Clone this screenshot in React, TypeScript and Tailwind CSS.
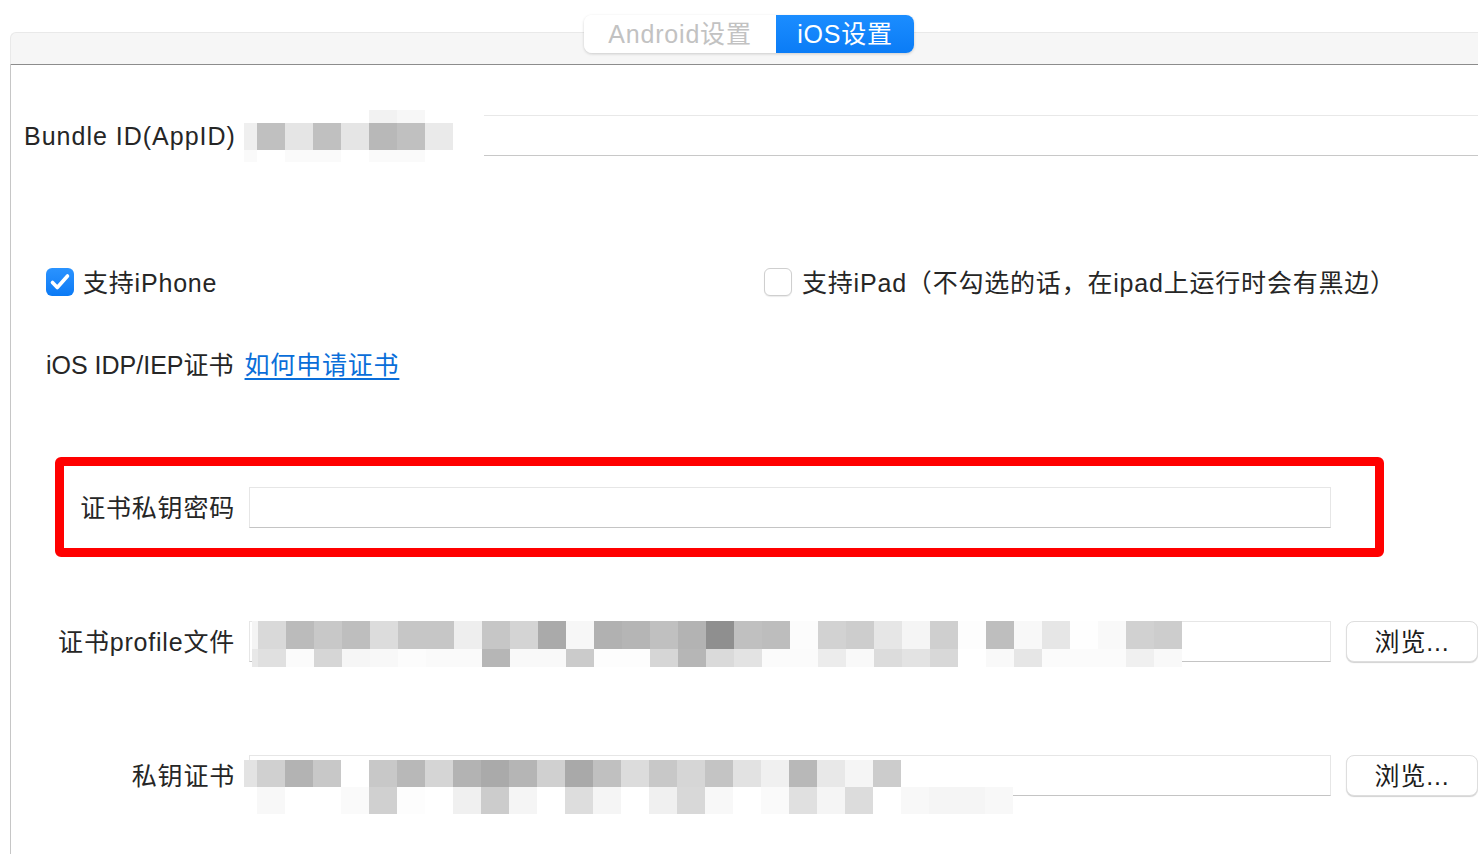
import React from "react";

type MosaicRow = { h: number; lead?: string; leadW?: number; cells: string[] };

const font = { fontFamily: '"Liberation Sans", "Noto Sans CJK SC", sans-serif' };

function Mosaic({ rows }: { rows: MosaicRow[] }) {
  return (
    <div className="flex flex-col">
      {rows.map((r, i) => (
        <div key={i} className="flex" style={{ height: r.h }}>
          {r.leadW ? <div style={{ width: r.leadW, background: r.lead }} /> : null}
          {r.cells.map((c, j) => (
            <div key={j} className="w-[28px] shrink-0" style={{ background: "#" + c + c + c }} />
          ))}
        </div>
      ))}
    </div>
  );
}

function Field({ children }: { children?: React.ReactNode }) {
  return (
    <div className="relative h-[41px] w-[1082px] shrink-0 border border-[#e6e6e6] border-b-[#c4c4c4] bg-white">
      {children}
    </div>
  );
}

function Browse() {
  return (
    <button className="ml-[15px] flex h-[41px] w-[132px] shrink-0 items-center justify-center rounded-[8px] border border-[#dedede] bg-white pt-[2px] text-[25px] text-[#1c1c1c] shadow-[0_1px_1px_rgba(0,0,0,0.18)]">
      浏览...
    </button>
  );
}

export default function App() {
  return (
    <div className="flex h-[854px] w-[1478px] flex-col overflow-hidden bg-white text-[25px] tracking-[0.8px] text-[#262626]" style={font}>
      {/* tab header */}
      <div className="relative h-[65px] shrink-0 pl-[10px] pt-[32px]">
        <div className="h-[33px] rounded-tl-[6px] border-b border-l border-t border-[#e9e9e9] border-b-[#8c8c8c] bg-[#f6f6f6]" />
        <div className="absolute left-[584px] top-[15px] flex h-[38px] rounded-[8px] shadow-[0_1px_3px_rgba(0,0,0,0.18)]">
          <div className="flex w-[192px] items-center justify-center rounded-l-[8px] bg-white pt-[1px] text-[25px] text-[#c2c2c2]">
            Android设置
          </div>
          <div className="flex w-[138px] items-center justify-center rounded-r-[8px] bg-gradient-to-b from-[#1b8dff] to-[#0a7cf6] pt-[1px] text-[25px] text-white">
            iOS设置
          </div>
        </div>
      </div>

      {/* panel */}
      <div className="ml-[10px] flex flex-1 flex-col border-l border-[#c6c6c6]">
        {/* bundle id */}
        <div className="relative mt-[50px] flex h-[41px] items-center">
          <div className="w-[473px] shrink-0 pl-[13px] pt-[3px] tracking-[1px]">Bundle ID(AppID)</div>
          <div className="h-[41px] flex-1 border-b border-t border-[#e8e8e8] border-b-[#c8c8c8]" />
          <div className="absolute left-[233px] top-[-5px]">
            <Mosaic
              rows={[
                { h: 13, leadW: 125, lead: "#ffffff", cells: ["f2", "f7"] },
                { h: 27, leadW: 13, lead: "#efefef", cells: ["c0", "e5", "c0", "e5", "b8", "c0", "ea"] },
                { h: 12, leadW: 13, lead: "#fafafa", cells: ["ff", "fa", "fa", "ff", "fa", "fa", "ff"] },
              ]}
            />
          </div>
        </div>

        {/* device checkboxes */}
        <div className="mt-[112px] flex h-[28px] items-center pl-[35px]">
          <div className="flex w-[718px] items-center">
            <div className="flex h-[28px] w-[28px] items-center justify-center rounded-[6px] bg-gradient-to-b from-[#2a93ff] to-[#0a7af5]">
              <svg width="24" height="24" viewBox="0 0 24 24">
                <path d="M4.5 12.5l4.8 5L19.5 6" fill="none" stroke="white" strokeWidth="3.6" strokeLinecap="round" strokeLinejoin="round" />
              </svg>
            </div>
            <span className="ml-[9px] pt-[3px]">支持iPhone</span>
          </div>
          <div className="flex items-center">
            <div className="h-[28px] w-[28px] rounded-[6px] border border-[#cfcfcf] bg-white shadow-[0_1px_1px_rgba(0,0,0,0.08)]" />
            <span className="ml-[10px] pt-[3px]">支持iPad（不勾选的话，在ipad上运行时会有黑边）</span>
          </div>
        </div>

        {/* certificate heading */}
        <div className="mt-[53px] flex h-[30px] items-center pl-[35px] pt-[3px]">
          <span className="tracking-normal">iOS IDP/IEP证书</span>
          <a className="ml-[11px] text-[#0a6ed9] underline decoration-[1.5px] underline-offset-[4px]">如何申请证书</a>
        </div>

        {/* password, highlighted */}
        <div className="ml-[44px] mt-[78px] flex h-[100px] w-[1329px] items-center rounded-[6px] border-[9px] border-[#ff0000]">
          <div className="w-[171px] shrink-0 pt-[3px] text-right">证书私钥密码</div>
          <div className="ml-[14px]">
            <Field />
          </div>
        </div>

        {/* profile */}
        <div className="mt-[64px] flex h-[41px] items-center">
          <div className="w-[224px] shrink-0 pt-[3px] text-right">证书profile文件</div>
          <div className="ml-[14px]">
            <Field>
              <div className="absolute left-[2px] top-[-1px]">
                <Mosaic
                  rows={[
                    {
                      h: 28,
                      leadW: 6,
                      lead: "#f4f4f4",
                      cells: ["d9", "bb", "c8", "be", "dc", "c6", "c6", "ee", "c6", "d4", "aa", "f7", "b1", "b5", "c0", "b3", "8f", "c0", "bd", "fc", "d2", "cd", "e6", "f5", "cf", "fd", "be", "f8", "e6", "fe", "f9", "d1", "cd"],
                    },
                    {
                      h: 18,
                      leadW: 6,
                      lead: "#e8e8e8",
                      cells: ["e0", "fb", "d6", "f6", "f8", "fc", "fa", "fa", "b6", "f9", "f9", "cb", "fd", "fd", "d6", "b6", "da", "e3", "fb", "fb", "ec", "f9", "dc", "e3", "d8", "ff", "f9", "e6", "fb", "fb", "fb", "f0", "f9"],
                    },
                  ]}
                />
              </div>
            </Field>
          </div>
          <Browse />
        </div>

        {/* private key */}
        <div className="mt-[93px] flex h-[41px] items-center">
          <div className="w-[224px] shrink-0 pt-[3px] text-right">私钥证书</div>
          <div className="ml-[14px]">
            <Field>
              <div className="absolute left-[-6px] top-[4px]">
                <Mosaic
                  rows={[
                    {
                      h: 27,
                      leadW: 13,
                      lead: "#e3e3e3",
                      cells: ["d0", "b3", "c8", "ff", "c8", "b8", "d5", "b3", "aa", "b5", "d0", "a9", "c0", "dc", "c8", "d6", "c4", "e2", "f0", "b8", "e8", "f5", "cc"],
                    },
                    {
                      h: 27,
                      leadW: 13,
                      lead: "#ffffff",
                      cells: ["f8", "ff", "ff", "fa", "d0", "fd", "ff", "f0", "cc", "f5", "ff", "dd", "f5", "ff", "f0", "d8", "f8", "ff", "fa", "e0", "f5", "dc", "ff", "f8", "f5", "f5", "f8"],
                    },
                  ]}
                />
              </div>
            </Field>
          </div>
          <Browse />
        </div>
      </div>
    </div>
  );
}
